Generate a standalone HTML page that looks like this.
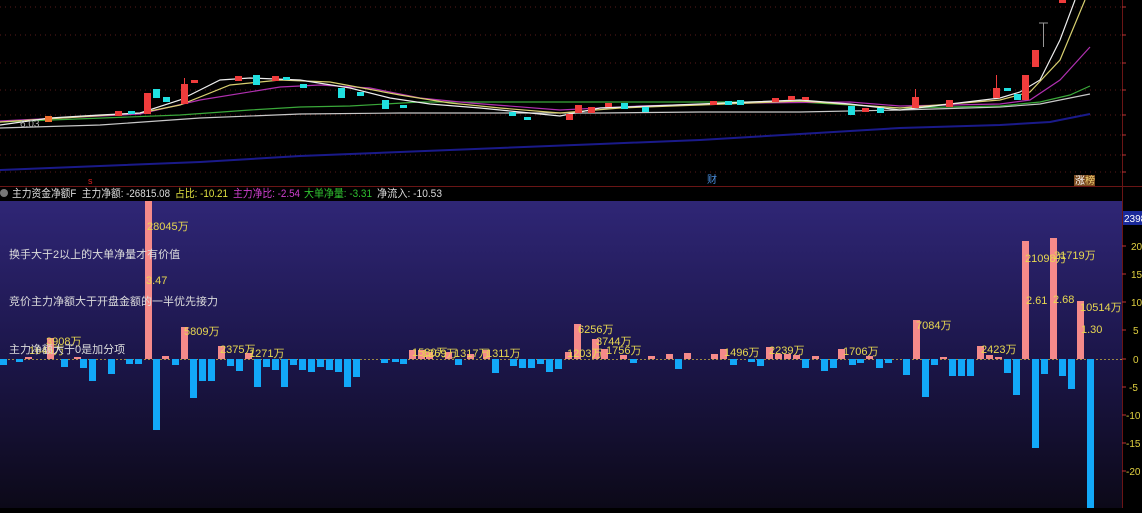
<!DOCTYPE html>
<html><head><meta charset="utf-8"><style>
html,body{margin:0;padding:0;background:#000;}
body{width:1142px;height:508px;overflow:hidden;position:relative;font-family:"Liberation Sans","Noto Sans CJK SC",sans-serif;}
svg text{font-family:"Liberation Sans","Noto Sans CJK SC",sans-serif;}
</style></head><body>
<svg width="1142" height="508" viewBox="0 0 1142 508" xmlns="http://www.w3.org/2000/svg">
<defs>
<linearGradient id="bg" x1="0" y1="0" x2="0" y2="1">
<stop offset="0" stop-color="#2f2676"/><stop offset="0.5" stop-color="#1c164a"/><stop offset="1" stop-color="#0c0918"/>
</linearGradient>
</defs>
<rect width="1142" height="508" fill="#000"/>
<g stroke="#5a1a1a" stroke-dasharray="1,4" stroke-width="1">
<line x1="0" y1="7" x2="1122" y2="7"/><line x1="0" y1="35" x2="1122" y2="35"/><line x1="0" y1="63" x2="1122" y2="63"/>
<line x1="0" y1="90" x2="1122" y2="90"/><line x1="0" y1="115" x2="1122" y2="115"/><line x1="0" y1="135" x2="1122" y2="135"/>
<line x1="0" y1="155" x2="1122" y2="155"/><line x1="0" y1="172" x2="1122" y2="172"/>
</g>
<line x1="1122.5" y1="0" x2="1122.5" y2="508" stroke="#6a1515"/>
<line x1="0" y1="186.5" x2="1142" y2="186.5" stroke="#6a1515"/>
<g stroke="#b33" stroke-width="1">
<line x1="1122" y1="7" x2="1126" y2="7"/><line x1="1122" y1="35" x2="1126" y2="35"/><line x1="1122" y1="63" x2="1126" y2="63"/><line x1="1122" y1="90" x2="1126" y2="90"/><line x1="1122" y1="115" x2="1126" y2="115"/><line x1="1122" y1="135" x2="1126" y2="135"/><line x1="1122" y1="155" x2="1126" y2="155"/><line x1="1122" y1="172" x2="1126" y2="172"/>
</g>
<g fill="none" stroke-width="1.2">
<polyline stroke="#1a1a8a" stroke-width="2" points="0,170 100,166 200,162 300,156 400,152 500,148 600,144 700,140 800,134 900,128 1000,125 1050,122 1090,114"/>
<polyline stroke="#c8c8c8" points="0,128 100,125 200,118 300,114 400,113 500,113 600,113 700,112 800,112 900,110 1000,107 1040,104 1090,94"/>
<polyline stroke="#3aa83a" points="0,122 180,115 250,110 300,107 350,106 420,102 500,102 600,102 700,102 800,102 900,108 1000,106 1040,102 1070,95 1090,86"/>
<polyline stroke="#b030b0" points="0,121 140,114 200,100 280,87 320,85 370,88 420,98 470,103 560,110 640,106 750,103 850,102 900,106 1000,104 1030,100 1060,80 1090,47"/>
<polyline stroke="#d8d070" points="0,122 140,113 180,105 230,85 280,80 330,82 400,95 450,103 500,108 560,113 620,108 700,105 800,101 900,108 1000,100 1030,92 1060,60 1085,0"/>
<polyline stroke="#eeeeee" points="0,125 50,118 100,115 140,113 180,100 220,80 250,78 300,80 350,88 390,98 430,104 480,108 520,112 560,116 600,108 650,106 700,104 750,102 800,100 850,104 900,110 950,104 1000,98 1020,92 1040,80 1060,40 1075,0"/>
</g>
<g>
<rect x="144" y="93" width="7" height="21" fill="#f03c3c"/>
<rect x="153" y="89" width="7" height="9" fill="#20e0e0"/>
<rect x="163" y="97" width="7" height="5" fill="#20e0e0"/>
<rect x="181" y="84" width="7" height="20" fill="#f03c3c"/><line x1="184.5" y1="78" x2="184.5" y2="86" stroke="#f03c3c"/>
<rect x="191" y="80" width="7" height="3" fill="#f03c3c"/>
<rect x="235" y="76" width="7" height="5" fill="#f03c3c"/>
<rect x="253" y="75" width="7" height="10" fill="#20e0e0"/>
<rect x="272" y="76" width="7" height="5" fill="#f03c3c"/>
<rect x="283" y="77" width="7" height="3" fill="#20e0e0"/>
<rect x="300" y="84" width="7" height="4" fill="#20e0e0"/>
<rect x="338" y="88" width="7" height="10" fill="#20e0e0"/>
<rect x="357" y="92" width="7" height="4" fill="#20e0e0"/>
<rect x="382" y="100" width="7" height="9" fill="#20e0e0"/>
<rect x="400" y="105" width="7" height="3" fill="#20e0e0"/>
<rect x="45" y="116" width="7" height="6" fill="#f07030"/>
<rect x="115" y="111" width="7" height="5" fill="#f03c3c"/>
<rect x="128" y="111" width="7" height="3" fill="#20e0e0"/>
<rect x="509" y="112" width="7" height="4" fill="#20e0e0"/>
<rect x="524" y="117" width="7" height="3" fill="#20e0e0"/>
<rect x="566" y="114" width="7" height="6" fill="#f03c3c"/>
<rect x="575" y="105" width="7" height="8" fill="#f03c3c"/>
<rect x="588" y="107" width="7" height="6" fill="#f03c3c"/>
<rect x="605" y="103" width="7" height="4" fill="#f03c3c"/>
<rect x="621" y="103" width="7" height="6" fill="#20e0e0"/>
<rect x="642" y="107" width="7" height="5" fill="#20e0e0"/>
<rect x="710" y="101" width="7" height="4" fill="#f03c3c"/>
<rect x="725" y="101" width="7" height="4" fill="#20e0e0"/>
<rect x="737" y="100" width="7" height="5" fill="#20e0e0"/>
<rect x="772" y="98" width="7" height="4" fill="#f03c3c"/>
<rect x="788" y="96" width="7" height="4" fill="#f03c3c"/>
<rect x="802" y="97" width="7" height="3" fill="#f03c3c"/>
<rect x="848" y="106" width="7" height="9" fill="#20e0e0"/>
<rect x="862" y="108" width="7" height="4" fill="#f03c3c"/>
<rect x="877" y="108" width="7" height="5" fill="#20e0e0"/>
<rect x="912" y="97" width="7" height="11" fill="#f03c3c"/><line x1="915.5" y1="89" x2="915.5" y2="97" stroke="#f03c3c"/>
<rect x="946" y="100" width="7" height="7" fill="#f03c3c"/>
<rect x="993" y="88" width="7" height="10" fill="#f03c3c"/><line x1="996.5" y1="75" x2="996.5" y2="88" stroke="#f03c3c"/>
<rect x="1004" y="88" width="7" height="3" fill="#20e0e0"/>
<rect x="1014" y="94" width="7" height="6" fill="#20e0e0"/>
<rect x="1022" y="75" width="7" height="25" fill="#f03c3c"/>
<rect x="1032" y="50" width="7" height="17" fill="#f03c3c"/>
<line x1="1043.5" y1="23" x2="1043.5" y2="47" stroke="#999"/><line x1="1039" y1="23" x2="1048" y2="23" stroke="#999"/>
<rect x="1059" y="0" width="7" height="3" fill="#f03c3c"/>
</g>
<text x="20" y="127" font-size="10" fill="#aaa">6.03</text>
<text x="88" y="184" font-size="9" fill="#d22">s</text>
<text x="707" y="183" font-size="10" fill="#4a90e0">财</text>
<rect x="1074" y="175" width="21" height="11" fill="#7a4a20"/>
<text x="1075" y="184" font-size="10" fill="#fff">涨</text><text x="1085" y="184" font-size="10" fill="#f0d070">榜</text>
<circle cx="4" cy="193" r="4" fill="#777"/>
<text x="12" y="197" font-size="11" fill="#ddd" textLength="158" lengthAdjust="spacingAndGlyphs">主力资金净额F&#160; 主力净额: -26815.08</text>
<text x="175" y="197" font-size="11" fill="#e0e040" textLength="53" lengthAdjust="spacingAndGlyphs">占比: -10.21</text>
<text x="233" y="197" font-size="11" fill="#d040d0" textLength="67" lengthAdjust="spacingAndGlyphs">主力净比: -2.54</text>
<text x="304" y="197" font-size="11" fill="#30c030" textLength="68" lengthAdjust="spacingAndGlyphs">大单净量: -3.31</text>
<text x="377" y="197" font-size="11" fill="#ddd" textLength="65" lengthAdjust="spacingAndGlyphs">净流入: -10.53</text>
<rect x="0" y="201" width="1122" height="307" fill="url(#bg)"/>
<line x1="0" y1="359.5" x2="1122" y2="359.5" stroke="#c8b040" stroke-dasharray="2,2" stroke-width="0.8"/>
<g fill="#f58a8a">
<rect x="25" y="357" width="7" height="2"/><rect x="47" y="338" width="7" height="21"/><rect x="74" y="357" width="7" height="2"/>
<rect x="145" y="201" width="7" height="158"/><rect x="162" y="356" width="7" height="3"/>
<rect x="181" y="327" width="7" height="32"/><rect x="218" y="346" width="7" height="13"/><rect x="245" y="353" width="7" height="6"/>
<rect x="409" y="350" width="7" height="9"/><rect x="418" y="350" width="7" height="9"/><rect x="426" y="352" width="7" height="7"/><rect x="445" y="352" width="7" height="7"/><rect x="467" y="354" width="7" height="5"/><rect x="483" y="350" width="7" height="9"/>
<rect x="565" y="352" width="7" height="7"/><rect x="574" y="324" width="7" height="35"/><rect x="592" y="339" width="7" height="20"/><rect x="601" y="349" width="7" height="10"/><rect x="620" y="355" width="7" height="4"/>
<rect x="648" y="356" width="7" height="3"/><rect x="666" y="354" width="7" height="5"/><rect x="684" y="353" width="7" height="6"/><rect x="711" y="354" width="7" height="5"/><rect x="720" y="349" width="7" height="10"/>
<rect x="766" y="347" width="7" height="12"/><rect x="775" y="354" width="7" height="5"/><rect x="784" y="354" width="7" height="5"/><rect x="793" y="355" width="7" height="4"/>
<rect x="812" y="356" width="7" height="3"/><rect x="838" y="349" width="7" height="10"/><rect x="866" y="356" width="7" height="3"/>
<rect x="913" y="320" width="7" height="39"/><rect x="940" y="357" width="7" height="2"/>
<rect x="977" y="346" width="7" height="13"/><rect x="986" y="355" width="7" height="4"/><rect x="995" y="357" width="7" height="2"/>
<rect x="1022" y="241" width="7" height="118"/><rect x="1050" y="238" width="7" height="121"/><rect x="1077" y="301" width="7" height="58"/>
</g>
<g fill="#12a8f8">
<rect x="0" y="359" width="7" height="6"/><rect x="16" y="359" width="7" height="3"/><rect x="61" y="359" width="7" height="8"/><rect x="80" y="359" width="7" height="9"/><rect x="89" y="359" width="7" height="22"/><rect x="108" y="359" width="7" height="15"/><rect x="126" y="359" width="7" height="5"/><rect x="135" y="359" width="7" height="5"/>
<rect x="153" y="359" width="7" height="71"/><rect x="172" y="359" width="7" height="6"/><rect x="190" y="359" width="7" height="39"/><rect x="199" y="359" width="7" height="22"/><rect x="208" y="359" width="7" height="22"/>
<rect x="227" y="359" width="7" height="7"/><rect x="236" y="359" width="7" height="12"/><rect x="254" y="359" width="7" height="28"/><rect x="263" y="359" width="7" height="8"/><rect x="272" y="359" width="7" height="11"/><rect x="281" y="359" width="7" height="28"/>
<rect x="290" y="359" width="7" height="6"/><rect x="299" y="359" width="7" height="11"/><rect x="308" y="359" width="7" height="13"/><rect x="317" y="359" width="7" height="8"/><rect x="326" y="359" width="7" height="11"/><rect x="335" y="359" width="7" height="13"/><rect x="344" y="359" width="7" height="28"/><rect x="353" y="359" width="7" height="18"/>
<rect x="381" y="359" width="7" height="4"/><rect x="392" y="359" width="7" height="3"/><rect x="400" y="359" width="7" height="5"/><rect x="455" y="359" width="7" height="6"/>
<rect x="492" y="359" width="7" height="14"/><rect x="510" y="359" width="7" height="7"/><rect x="519" y="359" width="7" height="9"/><rect x="528" y="359" width="7" height="9"/><rect x="537" y="359" width="7" height="5"/><rect x="546" y="359" width="7" height="13"/><rect x="555" y="359" width="7" height="10"/>
<rect x="630" y="359" width="7" height="4"/><rect x="675" y="359" width="7" height="10"/><rect x="730" y="359" width="7" height="6"/><rect x="748" y="359" width="7" height="3"/><rect x="757" y="359" width="7" height="7"/>
<rect x="802" y="359" width="7" height="9"/><rect x="821" y="359" width="7" height="12"/><rect x="830" y="359" width="7" height="9"/><rect x="849" y="359" width="7" height="6"/><rect x="857" y="359" width="7" height="4"/><rect x="876" y="359" width="7" height="9"/><rect x="885" y="359" width="7" height="4"/><rect x="903" y="359" width="7" height="16"/>
<rect x="922" y="359" width="7" height="38"/><rect x="931" y="359" width="7" height="6"/><rect x="949" y="359" width="7" height="17"/><rect x="958" y="359" width="7" height="17"/><rect x="967" y="359" width="7" height="17"/>
<rect x="1004" y="359" width="7" height="14"/><rect x="1013" y="359" width="7" height="36"/><rect x="1032" y="359" width="7" height="89"/><rect x="1041" y="359" width="7" height="15"/><rect x="1059" y="359" width="7" height="17"/><rect x="1068" y="359" width="7" height="30"/><rect x="1087" y="359" width="7" height="149"/>
</g>
<g font-size="11" fill="#e8d850">
<text x="147" y="230">28045万</text><text x="146" y="284">3.47</text>
<text x="46" y="345">3908万</text><text x="29" y="354">1645万</text>
<text x="184" y="335">5809万</text><text x="220" y="353">2375万</text><text x="249" y="357">1271万</text>
<text x="412" y="356">1580万</text><text x="422" y="357">1269万</text><text x="454" y="357">1317万</text><text x="486" y="357">1311万</text>
<text x="578" y="333">6256万</text><text x="596" y="345">3744万</text><text x="567" y="357">1203万</text><text x="606" y="354">1756万</text>
<text x="724" y="356">1496万</text><text x="769" y="354">2239万</text><text x="843" y="355">1706万</text>
<text x="916" y="329">7084万</text><text x="981" y="353">2423万</text>
<text x="1025" y="262">21098万</text><text x="1054" y="259">21719万</text><text x="1080" y="311">10514万</text>
<text x="1026" y="304">2.61</text><text x="1053" y="303">2.68</text><text x="1081" y="333">1.30</text>
</g>
<g font-size="11" fill="#dcdcdc">
<text x="9" y="258">换手大于2以上的大单净量才有价值</text>
<text x="9" y="305">竞价主力净额大于开盘金额的一半优先接力</text>
<text x="9" y="353">主力净额大于0是加分项</text>
</g>
<rect x="1123" y="211" width="19" height="14" fill="#1a2a9a"/>
<text x="1124" y="222" font-size="10" fill="#fff">2398</text>
<g font-size="10" fill="#e0d040">
<text x="1131" y="250">20</text><text x="1131" y="278">15</text><text x="1131" y="306">10</text><text x="1133" y="334">5</text><text x="1133" y="363">0</text>
<text x="1129" y="391">-5</text><text x="1126" y="419">-10</text><text x="1126" y="447">-15</text><text x="1126" y="475">-20</text>
</g>
<g stroke="#b33"><line x1="1122" y1="246" x2="1126" y2="246"/><line x1="1122" y1="274" x2="1126" y2="274"/><line x1="1122" y1="302" x2="1126" y2="302"/><line x1="1122" y1="330" x2="1126" y2="330"/><line x1="1122" y1="359" x2="1126" y2="359"/><line x1="1122" y1="387" x2="1126" y2="387"/><line x1="1122" y1="415" x2="1126" y2="415"/><line x1="1122" y1="443" x2="1126" y2="443"/><line x1="1122" y1="471" x2="1126" y2="471"/></g>
</svg>
</body></html>
